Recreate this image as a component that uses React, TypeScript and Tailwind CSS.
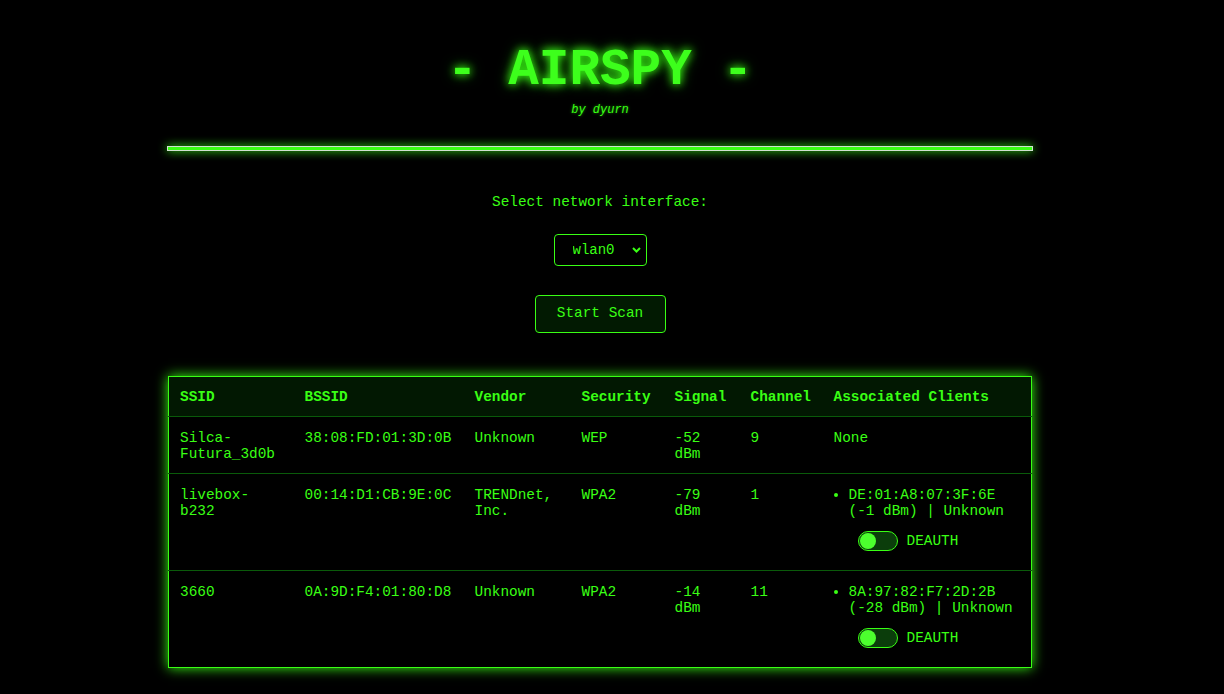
import React from "react";

const G = "#39ff14";

type Client = { mac: string; info: string };
type Row = {
  ssid: string;
  bssid: string;
  vendor: string;
  security: string;
  signal: string;
  channel: string;
  clients: Client[];
};

const rows: Row[] = [
  {
    ssid: "Silca-Futura_3d0b",
    bssid: "38:08:FD:01:3D:0B",
    vendor: "Unknown",
    security: "WEP",
    signal: "-52 dBm",
    channel: "9",
    clients: [],
  },
  {
    ssid: "livebox-b232",
    bssid: "00:14:D1:CB:9E:0C",
    vendor: "TRENDnet, Inc.",
    security: "WPA2",
    signal: "-79 dBm",
    channel: "1",
    clients: [{ mac: "DE:01:A8:07:3F:6E", info: "(-1 dBm) | Unknown" }],
  },
  {
    ssid: "3660",
    bssid: "0A:9D:F4:01:80:D8",
    vendor: "Unknown",
    security: "WPA2",
    signal: "-14 dBm",
    channel: "11",
    clients: [{ mac: "8A:97:82:F7:2D:2B", info: "(-28 dBm) | Unknown" }],
  },
];

function Toggle() {
  return (
    <div className="flex items-center gap-[9px] ml-[9px] mt-[12px] mb-[8px]">
      <div className="w-[40px] h-[20px] rounded-full border border-[#39ff14] bg-[#0b3d0b] flex items-center pl-[1px]">
        <div className="w-[16px] h-[16px] rounded-full bg-[#4cff2e]" />
      </div>
      <span>DEAUTH</span>
    </div>
  );
}

export default function App() {
  return (
    <div
      className="min-h-[694px] bg-black text-[#39ff14] pr-[24px]"
      style={{ fontFamily: '"Liberation Mono", "Courier New", monospace' }}
    >
      <div className="w-[866px] mx-auto flex flex-col items-center pt-[42px]">
        <h1 className="text-[51px] font-bold leading-[57px] [text-shadow:0_0_8px_#39ff14,0_0_14px_#1f9f0a] text-[#3dff1c]">
          - AIRSPY -
        </h1>
        <div className="text-[12px] italic leading-[14px] mt-[4px] [text-shadow:0_0_3px_#1f8f0a]">
          by dyurn
        </div>
        <div className="w-full h-[5px] mt-[29px] bg-[#39ff14] border border-[#d0e0d0] shadow-[0_0_10px_#39ff14]" />

        <div className="text-[14.4px] leading-[16px] mt-[43px]">Select network interface:</div>

        <div className="relative mt-[24px]">
          <select
            className="appearance-none w-[93px] h-[32px] bg-black border border-[#39ff14] rounded-[4px] text-[14px] text-[#39ff14] pl-[18px] outline-none"
            style={{ fontFamily: '"Liberation Mono", "Courier New", monospace' }}
            defaultValue="wlan0"
          >
            <option value="wlan0">wlan0</option>
          </select>
          <svg
            className="absolute right-[6px] top-[13px] pointer-events-none"
            width="9"
            height="6"
            viewBox="0 0 9 6"
          >
            <path d="M1 1 L4.5 4.5 L8 1" fill="none" stroke={G} strokeWidth="2" />
          </svg>
        </div>

        <button
          className="mt-[29px] w-[131px] h-[38px] bg-[#021a02] border border-[#39ff14] rounded-[4px] text-[14.4px] text-[#39ff14]"
          style={{ fontFamily: '"Liberation Mono", "Courier New", monospace' }}
        >
          Start Scan
        </button>

        <table className="mt-[43px] w-[864px] table-fixed border-collapse border border-[#39ff14] shadow-[0_0_12px_#39ff14] text-[14.4px] leading-[16px] self-start ml-[1px]">
          <colgroup>
            <col className="w-[125px]" />
            <col className="w-[170px]" />
            <col className="w-[107px]" />
            <col className="w-[93px]" />
            <col className="w-[76px]" />
            <col className="w-[83px]" />
            <col />
          </colgroup>
          <thead>
            <tr className="bg-[#021802] border-b border-[#0a5a0a]">
              {["SSID", "BSSID", "Vendor", "Security", "Signal", "Channel", "Associated Clients"].map((h) => (
                <th key={h} className="px-[11px] pt-[12px] pb-[11px] text-left font-bold align-top">
                  {h}
                </th>
              ))}
            </tr>
          </thead>
          <tbody>
            {rows.map((r, i) => (
              <tr key={r.bssid} className={i < rows.length - 1 ? "border-b border-[#0a5a0a]" : ""}>
                <td className="px-[11px] pt-[13px] pb-[11px] align-top">{r.ssid}</td>
                <td className="px-[11px] pt-[13px] pb-[11px] align-top whitespace-nowrap">{r.bssid}</td>
                <td className="px-[11px] pt-[13px] pb-[11px] align-top">{r.vendor}</td>
                <td className="px-[11px] pt-[13px] pb-[11px] align-top">{r.security}</td>
                <td className="px-[11px] pt-[13px] pb-[11px] align-top">{r.signal}</td>
                <td className="px-[11px] pt-[13px] pb-[11px] align-top">{r.channel}</td>
                <td className="px-[11px] pt-[13px] pb-[11px] align-top">
                  {r.clients.length === 0 ? (
                    "None"
                  ) : (
                    <ul className="list-disc pl-[15px]">
                      {r.clients.map((c) => (
                        <li key={c.mac}>
                          {c.mac} {c.info}
                          <Toggle />
                        </li>
                      ))}
                    </ul>
                  )}
                </td>
              </tr>
            ))}
          </tbody>
        </table>
      </div>
    </div>
  );
}
